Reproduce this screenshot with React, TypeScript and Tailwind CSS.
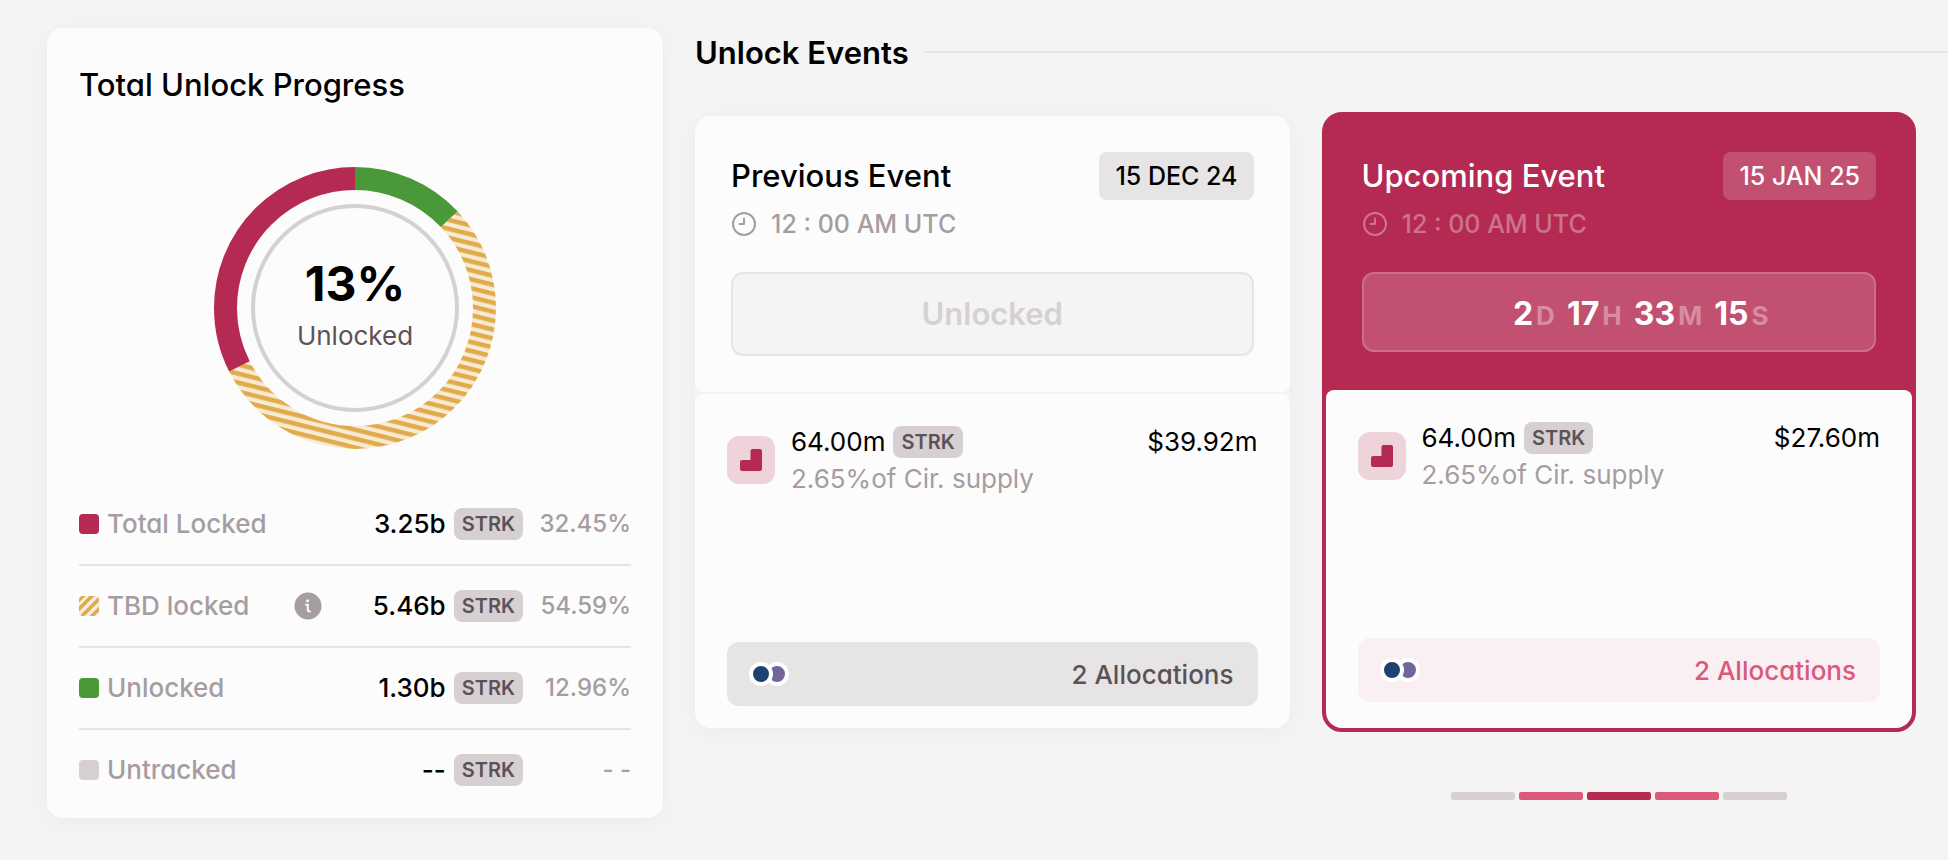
import React from "react";

const rows = [
  { label: "Total Locked", swatch: "bg-[#b52a52]", amount: "3.25b", percent: "32.45%" },
  {
    label: "TBD locked",
    swatch: "bg-[repeating-linear-gradient(-45deg,#f8ead5_0_3px,#e0ab48_3px_7px)]",
    amount: "5.46b",
    percent: "54.59%",
    info: true,
  },
  { label: "Unlocked", swatch: "bg-[#4a9938]", amount: "1.30b", percent: "12.96%" },
  { label: "Untracked", swatch: "bg-[#d6d0d2]", amount: "--", percent: "- -" },
];

// share of the ring, as a length on a circle with pathLength 100
function Arc({ start, size, stroke }: { start: number; size: number; stroke: string }) {
  return (
    <circle
      cx="141"
      cy="141"
      r="129.5"
      fill="none"
      stroke={stroke}
      strokeWidth="23"
      pathLength="100"
      strokeDasharray={`${size} ${100 - size}`}
      strokeDashoffset={-start}
      transform="rotate(-90 141 141)"
    />
  );
}

function Donut() {
  return (
    <div className="relative self-center">
      <svg width="282" height="282" viewBox="0 0 282 282" aria-hidden="true">
        <defs>
          <mask id="tbd">
            <Arc start={12.96} size={54.59} stroke="#fff" />
          </mask>
          <pattern id="stripes" width="10" height="8.7" patternUnits="userSpaceOnUse" patternTransform="rotate(14)">
            <rect width="10" height="8.7" fill="#f8ead5" />
            <rect y="1" width="10" height="4.5" fill="#e0ab48" />
          </pattern>
        </defs>
        <rect width="282" height="282" fill="url(#stripes)" mask="url(#tbd)" />
        <Arc start={0} size={12.96} stroke="#4a9938" />
        <Arc start={67.55} size={32.45} stroke="#b52a52" />
        <circle cx="141" cy="141" r="102" fill="none" stroke="#d6d0d2" strokeWidth="4" />
      </svg>
      <div className="absolute inset-0 flex flex-col items-center justify-center pb-2">
        <p className="text-5xl leading-[56px] font-bold">13%</p>
        <p className="mt-2 text-[26px] leading-8 text-[#5c5256]">Unlocked</p>
      </div>
    </div>
  );
}

function Ticker() {
  return (
    <span className="rounded-lg bg-[#d6d0d2] px-2 text-xl leading-8 font-semibold text-[#5c5256]">STRK</span>
  );
}

function InfoIcon() {
  return (
    <svg width="28" height="28" viewBox="0 0 28 28" aria-hidden="true">
      <circle cx="14" cy="14" r="13.5" fill="#a69da1" />
      <circle cx="13.5" cy="8.8" r="1.5" fill="#fcfcfc" />
      <path
        d="M12 12.8h1.800v5q0 1.700 1.700 1.700h.6"
        fill="none"
        stroke="#fcfcfc"
        strokeWidth="2"
        strokeLinecap="round"
      />
    </svg>
  );
}

function ClockIcon() {
  return (
    <svg
      width="26"
      height="26"
      viewBox="0 0 26 26"
      fill="none"
      stroke="currentColor"
      strokeWidth="2"
      strokeLinecap="round"
      strokeLinejoin="round"
      aria-hidden="true"
    >
      <circle cx="13" cy="13" r="11" />
      <path d="M13 7.5V13H8.500" />
    </svg>
  );
}

function CliffIcon() {
  return (
    <div className="flex size-12 shrink-0 items-center justify-center rounded-xl bg-[#efd3db]">
      <svg width="22" height="22" viewBox="0 0 22 22" fill="#b52a52" aria-hidden="true">
        <path d="M12.5 0h7.500a2 2 0 0 1 2 2v18a2 2 0 0 1-2 2H2a2 2 0 0 1-2-2v-7a2 2 0 0 1 2-2h7.500a1 1 0 0 0 1-1V2a2 2 0 0 1 2-2z" />
      </svg>
    </div>
  );
}

function ProgressCard() {
  return (
    <section className="flex w-[616px] shrink-0 flex-col rounded-2xl bg-[#fcfcfc] px-8 pt-9 pb-2 shadow-[0_4px_24px_rgba(0,0,0,0.04)]">
      <h2 className="mb-[62px] pt-px text-[31px] leading-10 font-medium">Total Unlock Progress</h2>
      <Donut />
      <ul className="mt-[35px] flex flex-col divide-y-2 divide-[#e5e5e5]">
        {rows.map((row) => (
          <li key={row.label} className="flex h-[82px] items-center text-[26px] leading-8 font-medium text-[#a69da1] last:h-20">
            <span className={`mr-2 size-5 rounded-sm ${row.swatch}`} />
            <span>{row.label}</span>
            {row.info && (
              <button aria-label="About TBD locked" className="ml-[45px]">
                <InfoIcon />
              </button>
            )}
            <span className="mr-2 ml-auto text-black">{row.amount}</span>
            <Ticker />
            <span className="w-[108px] text-right text-2xl">{row.percent}</span>
          </li>
        ))}
      </ul>
    </section>
  );
}

function Allocations({ className }: { className: string }) {
  return (
    <button className={`mt-auto flex h-16 items-center justify-between rounded-xl pr-6 pl-[22px] text-[26px] font-medium ${className}`}>
      <span className="flex">
        <span className="z-[1] size-6 rounded-full border-4 border-white bg-[#1e4172]" />
        <span className="-ml-2 size-6 rounded-full border-4 border-white bg-[#70669a]" />
      </span>
      2 Allocations
    </button>
  );
}

function Supply({ value }: { value: string }) {
  return (
    <div className="flex">
      <div className="mt-2.5">
        <CliffIcon />
      </div>
      <div className="ml-4 text-[26px]">
        <p className="flex items-center gap-2 leading-8">
          64.00m <Ticker />
        </p>
        <p className="mt-[3px] leading-9 text-[#a69da1]">2.65%of Cir. supply</p>
      </div>
      <p className="ml-auto text-[26px] leading-8">{value}</p>
    </div>
  );
}

function PreviousEvent() {
  return (
    <article className="flex flex-1 flex-col gap-0.5 rounded-2xl bg-[#f4f4f4] shadow-[0_4px_24px_rgba(0,0,0,0.04)]">
      <div className="h-[276px] rounded-t-2xl rounded-b-lg bg-[#fcfcfc] px-9 pt-9">
        <div className="flex items-center justify-between">
          <h3 className="text-[31px] font-medium">Previous Event</h3>
          <span className="rounded-lg bg-[#e6e4e5] px-4 text-[25px] leading-[48px] font-medium">15 DEC 24</span>
        </div>
        <p className="mt-2 flex items-center gap-3.5 text-[25px] leading-8 font-medium text-[#a69da1]">
          <ClockIcon />
          12 : 00 AM UTC
        </p>
        <button className="mt-8 h-[84px] w-full rounded-xl border-2 border-[#e5e5e5] bg-[#f4f4f4] text-[31px] font-semibold text-[#d6d0d2]">
          Unlocked
        </button>
      </div>
      <div className="flex h-[334px] flex-col rounded-t-lg rounded-b-2xl bg-[#fcfcfc] px-8 pt-8 pb-[22px]">
        <Supply value="$39.92m" />
        <Allocations className="bg-[#e6e4e5] text-[#5c5256]" />
      </div>
    </article>
  );
}

const countdown = [
  { value: "2", unit: "D" },
  { value: "17", unit: "H" },
  { value: "33", unit: "M" },
  { value: "15", unit: "S" },
];

function UpcomingEvent() {
  return (
    <article className="flex flex-1 flex-col rounded-[20px] border-4 border-[#b52a52] bg-[#b52a52]">
      <div className="h-[274px] px-9 pt-9 text-white">
        <div className="flex items-center justify-between">
          <h3 className="text-[31px] font-medium">Upcoming Event</h3>
          <span className="rounded-lg bg-white/18 px-4 text-[25px] leading-[48px] font-medium">15 JAN 25</span>
        </div>
        <p className="mt-2 flex items-center gap-3.5 text-[25px] leading-8 font-medium text-white/35">
          <ClockIcon />
          12 : 00 AM UTC
        </p>
        <div className="mt-8 flex h-20 items-center justify-center gap-3 rounded-xl border-2 border-white/18 bg-white/18 pt-1 pl-11 text-[32px] font-bold">
          {countdown.map(({ value, unit }) => (
            <span key={unit} className="flex items-baseline gap-[3px]">
              {value}
              <span className="text-[26px] text-white/35">{unit}</span>
            </span>
          ))}
        </div>
      </div>
      <div className="flex h-[338px] flex-col rounded-t-lg rounded-b-2xl bg-[#fcfcfc] px-8 pt-8 pb-[26px]">
        <Supply value="$27.60m" />
        <Allocations className="bg-[#faeff2] text-[#db5a79]" />
      </div>
    </article>
  );
}

const pages = ["bg-[#d6d0d2]", "bg-[#db5a79]", "bg-[#b52a52]", "bg-[#db5a79]", "bg-[#d6d0d2]"];

export default function App() {
  return (
    <main className="flex min-h-screen items-start gap-8 overflow-hidden bg-[#f4f4f4] pt-7 pl-[47px] font-['Inter',sans-serif] text-black [font-feature-settings:'cv11']">
      <ProgressCard />
      <section className="min-w-0 flex-1">
        <div className="flex h-12 items-center gap-4">
          <h2 className="pt-0.5 text-[31px] font-semibold">Unlock Events</h2>
          <span className="h-0.5 flex-1 bg-[#e5e5e5]" />
        </div>
        <div className="mt-9 flex items-center gap-8 pr-8">
          <PreviousEvent />
          <div className="relative flex flex-1">
            <UpcomingEvent />
            <nav aria-label="Events" className="absolute inset-x-0 top-full mt-[60px] flex justify-center gap-1">
              {pages.map((color, i) => (
                <button key={i} aria-label={`Event ${i + 1}`} className={`h-2 w-16 rounded-xs ${color}`} />
              ))}
            </nav>
          </div>
        </div>
      </section>
    </main>
  );
}
